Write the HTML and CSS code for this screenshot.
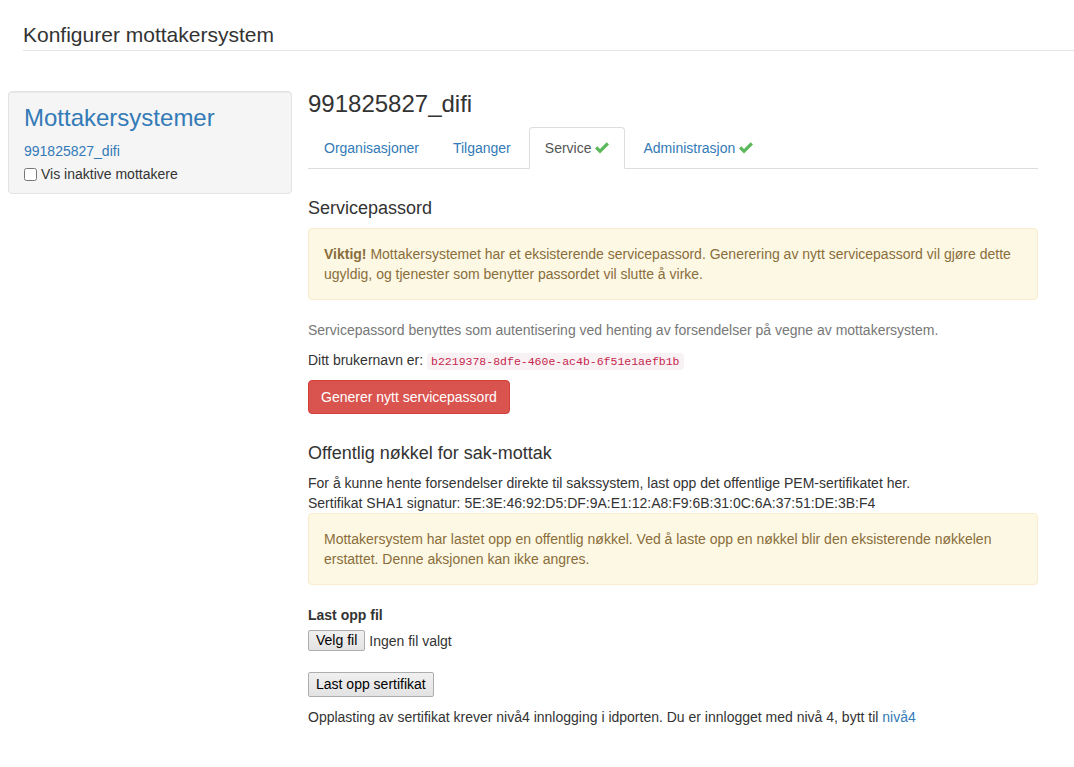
FILE: index.html
```html
<!DOCTYPE html>
<html lang="no">
<head>
<meta charset="utf-8">
<title>Konfigurer mottakersystem</title>
<link rel="stylesheet" href="styles.css">
</head>
<body>
<header class="page-header">
  <h1 class="page-title">Konfigurer mottakersystem</h1>
</header>
<div class="layout">
  <aside class="well">
    <h2 class="well-title">Mottakersystemer</h2>
    <a class="well-link" href="#">991825827_difi</a>
    <label class="check"><input type="checkbox"> Vis inaktive mottakere</label>
  </aside>
  <main class="main">
    <h3 class="main-title">991825827_difi</h3>
    <ul class="tabs">
      <li class="tab"><a href="#">Organisasjoner</a></li>
      <li class="tab"><a href="#">Tilganger</a></li>
      <li class="tab active"><a href="#">Service <svg class="ok" viewBox="0 0 14 12" width="14" height="12"><path d="M0 6.6 L2.3 4.3 L5 7 L11.7 0.3 L14 2.6 L5 11.6 Z"/></svg></a></li>
      <li class="tab"><a href="#">Administrasjon <svg class="ok" viewBox="0 0 14 12" width="14" height="12"><path d="M0 6.6 L2.3 4.3 L5 7 L11.7 0.3 L14 2.6 L5 11.6 Z"/></svg></a></li>
    </ul>
    <section class="section first">
      <h4 class="sec-title">Servicepassord</h4>
      <div class="alert"><strong>Viktig!</strong> Mottakersystemet har et eksisterende servicepassord. Generering av nytt servicepassord vil gjøre dette ugyldig, og tjenester som benytter passordet vil slutte å virke.</div>
      <p class="muted">Servicepassord benyttes som autentisering ved henting av forsendelser på vegne av mottakersystem.</p>
      <p class="para user">Ditt brukernavn er: <code class="code">b2219378-8dfe-460e-ac4b-6f51e1aefb1b</code></p>
      <button class="btn-danger" type="button">Generer nytt servicepassord</button>
    </section>
    <section class="section second">
      <h4 class="sec-title">Offentlig nøkkel for sak-mottak</h4>
      <p class="para tight">For å kunne hente forsendelser direkte til sakssystem, last opp det offentlige PEM-sertifikatet her.<br>Sertifikat SHA1 signatur: 5E:3E:46:92:D5:DF:9A:E1:12:A8:F9:6B:31:0C:6A:37:51:DE:3B:F4</p>
      <div class="alert">Mottakersystem har lastet opp en offentlig nøkkel. Ved å laste opp en nøkkel blir den eksisterende nøkkelen erstattet. Denne aksjonen kan ikke angres.</div>
      <div class="upload">
        <div class="upload-label">Last opp fil</div>
        <div class="file-row"><button class="native-btn small" type="button">Velg fil</button><span class="file-name">Ingen fil valgt</span></div>
        <button class="native-btn upload-btn" type="button">Last opp sertifikat</button>
      </div>
      <p class="para note">Opplasting av sertifikat krever nivå4 innlogging i idporten. Du er innlogget med nivå 4, bytt til <a href="#">nivå4</a></p>
    </section>
  </main>
</div>
</body>
</html>
```
FILE: styles.css
```css
* { box-sizing: border-box; }
html, body { margin: 0; padding: 0; }
body {
  font-family: "Liberation Sans", Arial, sans-serif;
  font-size: 14px;
  line-height: 20px;
  color: #333;
  background: #fff;
}
a { color: #337ab7; text-decoration: none; }

.page-header {
  margin: 24px 0 0 23px;
  padding-bottom: 4px;
  border-bottom: 1px solid #e5e5e5;
}
.page-title {
  margin: 0;
  font-size: 21px;
  line-height: 22px;
  font-weight: normal;
  color: #333;
}

.layout {
  display: flex;
  align-items: flex-start;
  gap: 16px;
  margin: 40px 0 0 8px;
}

.well {
  width: 284px;
  flex: none;
  background: #f5f5f5;
  border: 1px solid #e3e3e3;
  border-radius: 4px;
  padding: 13px 15px 4px;
  box-shadow: inset 0 1px 1px rgba(0,0,0,.05);
  display: flex;
  flex-direction: column;
}
.well-title {
  margin: 0 0 10px;
  font-size: 24px;
  line-height: 26px;
  font-weight: normal;
  color: #337ab7;
}
.well-link { display: block; line-height: 20px; }
.check {
  display: flex;
  align-items: center;
  margin: 3px 0 5px;
  line-height: 20px;
}
.check input { margin: 0 4px 0 0; width: 13px; height: 13px; }

.main { width: 730px; flex: none; }
.main-title {
  margin: 0 0 10px;
  font-size: 24px;
  line-height: 26px;
  font-weight: normal;
}

.tabs {
  list-style: none;
  margin: 0;
  padding: 0;
  display: flex;
  border-bottom: 1px solid #ddd;
}
.tab { margin-bottom: -1px; }
.tab a {
  display: flex;
  align-items: center;
  gap: 4px;
  margin-right: 2px;
  padding: 10px 15px;
  border: 1px solid transparent;
  border-radius: 4px 4px 0 0;
  line-height: 20px;
}
.tab.active a {
  color: #555;
  background: #fff;
  border-color: #ddd #ddd transparent;
}
.ok { fill: #5cb85c; display: block; }

.section.first { padding-top: 19px; }
.sec-title {
  margin: 10px 0 10px;
  font-size: 18px;
  line-height: 20px;
  font-weight: normal;
}
.section.second .sec-title { margin-top: 29px; }

.alert {
  padding: 15px;
  margin-bottom: 20px;
  border: 1px solid #faebcc;
  border-radius: 4px;
  background: #fcf8e3;
  color: #8a6d3b;
  line-height: 20px;
}
.alert strong { font-weight: bold; }

.muted { color: #777; margin: 0 0 10px; }
.para { margin: 0 0 10px; }
.para.user { height: 20px; }
.para.tight { margin: 0; }

.code {
  font-family: "Liberation Mono", "DejaVu Sans Mono", monospace;
  font-size: 11.5px;
  line-height: 1;
  padding: 2px 4px;
  color: #c7254e;
  background: #f9f2f4;
  border-radius: 4px;
}

.btn-danger {
  display: block;
  font-family: inherit;
  font-size: 14px;
  line-height: 20px;
  padding: 6px 12px;
  color: #fff;
  background: #d9534f;
  border: 1px solid #d43f3a;
  border-radius: 4px;
}

.upload { margin-bottom: 10px; }
.upload-label { font-weight: bold; margin-bottom: 5px; line-height: 20px; }
.file-row { display: flex; align-items: center; gap: 4px; height: 21px; }
.native-btn {
  font-family: "Liberation Sans", Arial, sans-serif;
  font-size: 14px;
  color: #000;
  background: linear-gradient(#f0f0f0, #e3e3e3);
  border: 1px solid #adadad;
  border-radius: 2px;
  padding: 0 7px;
}
.native-btn.small { height: 21px; line-height: 19px; padding: 0 7px; }
.file-name { color: #333; }
.upload-btn {
  display: block;
  margin-top: 21px;
  height: 25px;
  line-height: 23px;
}
.note { margin-top: 0; }
```
